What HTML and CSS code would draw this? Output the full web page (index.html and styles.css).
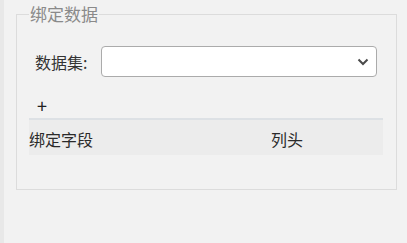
FILE: index.html
```html
<!DOCTYPE html>
<html lang="zh">
<head>
<meta charset="utf-8">
<link rel="stylesheet" href="styles.css">
</head>
<body>
<div class="strip"></div>
<main class="main">
  <fieldset class="group">
    <legend class="group-title"><span class="group-text">绑定数据</span></legend>
    <div class="field-row">
      <label class="field-label">数据集:</label>
      <div class="select">
        <svg class="chevron" width="12" height="8" viewBox="0 0 12 8"><polyline points="1.5,1.5 6,6 10.5,1.5" fill="none" stroke="#4a4a4a" stroke-width="2"/></svg>
      </div>
    </div>
    <div class="add">+</div>
    <div class="table">
      <div class="thead">
        <div class="th">绑定字段</div>
        <div class="th">列头</div>
      </div>
    </div>
  </fieldset>
</main>
</body>
</html>
```
FILE: styles.css
```css
html, body { margin: 0; padding: 0; }
body {
  width: 407px;
  height: 243px;
  background: #f2f2f2;
  display: flex;
  font-family: "Noto Sans CJK SC", "Noto Sans", sans-serif;
  color: #333;
  overflow: hidden;
}
.strip { width: 4px; background: #e8e8e8; flex: none; }
.main { flex: 1; padding: 4px 0 0 12px; }
.group {
  margin: 0;
  width: 381px;
  height: 186px;
  border: 1px solid #dcdcdc;
  padding: 0 12px;
  box-sizing: border-box;
}
.group-title {
  padding: 0 1px;
  line-height: 20px;
  font-size: 17px;
}
.group-text {
  font-size: 17px;
  letter-spacing: 0;
  color: #8a8a8a;
}
.field-row {
  display: flex;
  align-items: center;
  margin-top: 22px;
  padding-left: 6px;
}
.field-label {
  font-size: 16px;
  width: 66px;
  line-height: 20px;
}
.select {
  width: 267px;
  height: 29px;
  border: 1px solid #ababab;
  border-radius: 4px;
  background: #fff;
  display: flex;
  align-items: center;
  justify-content: flex-end;
  padding-right: 7px;
  box-sizing: content-box;
}
.chevron { display: block; }
.add {
  margin-top: 17px;
  padding-left: 8px;
  font-size: 18px;
  line-height: 22px;
  color: #222;
}
.table {
  margin-top: 2px;
  width: 354px;
  border-top: 2px solid #dde1e5;
}
.thead {
  display: grid;
  grid-template-columns: 242px 1fr;
  background: #ececec;
  height: 35px;
  align-items: center;
}
.th {
  font-size: 16px;
  line-height: 20px;
  padding-top: 3px;
  color: #2a2a2a;
}
```
